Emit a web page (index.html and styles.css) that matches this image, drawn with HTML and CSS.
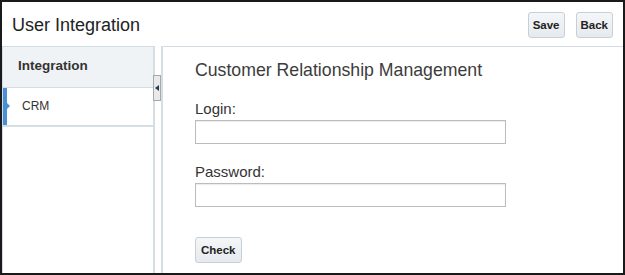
FILE: index.html
```html
<!DOCTYPE html>
<html>
<head>
<meta charset="utf-8">
<link rel="stylesheet" href="styles.css">
</head>
<body>
<div class="frame">
  <header class="topbar">
    <h1 class="title">User Integration</h1>
    <div class="actions">
      <button class="btn">Save</button>
      <button class="btn">Back</button>
    </div>
  </header>
  <div class="main">
    <aside class="nav">
      <div class="nav-head">Integration</div>
      <div class="nav-item active">CRM</div>
    </aside>
    <div class="splitter"><span class="tri"></span></div>
    <section class="content">
      <h2 class="section-title">Customer Relationship Management</h2>
      <label class="field-label">Login:</label>
      <input class="field" type="text">
      <label class="field-label">Password:</label>
      <input class="field" type="password">
      <button class="btn check">Check</button>
    </section>
  </div>
</div>
</body>
</html>
```
FILE: styles.css
```css
* { box-sizing: border-box; }
html, body { margin: 0; padding: 0; background: #fff; }
body { font-family: "Liberation Sans", Arial, sans-serif; color: #333; }

.frame {
  width: 625px;
  height: 275px;
  border: 2px solid #1a1a1a;
  display: flex;
  flex-direction: column;
  background: #fff;
  overflow: hidden;
}

.topbar {
  height: 44px;
  flex: none;
  display: flex;
  align-items: center;
  justify-content: space-between;
  padding: 1px 10px 0 10px;
}
.title {
  margin: 0;
  font-size: 18px;
  font-weight: normal;
  line-height: 22px;
  color: #222;
}
.actions { display: flex; gap: 11px; }

.btn {
  font-family: "Liberation Sans", Arial, sans-serif;
  font-size: 11.5px;
  font-weight: bold;
  color: #222;
  height: 26px;
  padding: 0 4px;
  background: linear-gradient(#f4f6f8, #e6eaee);
  border: 1px solid #c6d0d8;
  border-radius: 3px;
}

.main {
  flex: 1;
  display: flex;
  gap: 6px;
  position: relative;
}

.nav {
  width: 153px;
  flex: none;
  border-left: 1px solid #d3dce3;
  border-top: 1px solid #d3dce3;
  border-right: 2px solid #d6dee5;
  background: #fff;
}
.nav-head {
  height: 41px;
  background: #f0f3f5;
  border-bottom: 1px solid #d6dee5;
  padding-left: 15px;
  font-size: 13.5px;
  font-weight: bold;
  line-height: 38px;
  color: #333;
}
.nav-item {
  height: 39px;
  border-bottom: 2px solid #d6dee5;
  padding-left: 19px;
  font-size: 12px;
  line-height: 37px;
  color: #333;
  position: relative;
}
.nav-item.active::before {
  content: "";
  position: absolute;
  left: 0;
  top: 0;
  width: 4px;
  height: 37px;
  background: #4a8fd6;
}
.nav-item.active::after {
  content: "";
  position: absolute;
  left: 4px;
  top: 15px;
  border-left: 3px solid #4a8fd6;
  border-top: 3px solid transparent;
  border-bottom: 3px solid transparent;
}

.splitter {
  position: absolute;
  left: 151px;
  top: 29px;
  width: 8px;
  height: 26px;
  background: #e9e9e9;
  border: 1px solid #a8a8a8;
}
.splitter .tri {
  position: absolute;
  left: 1px;
  top: 9px;
  border-right: 4px solid #2a3a55;
  border-top: 3px solid transparent;
  border-bottom: 3px solid transparent;
}

.content {
  flex: 1;
  border-top: 1px solid #d3dce3;
  border-left: 2px solid #d6dee5;
  padding: 13px 0 0 32px;
  display: flex;
  flex-direction: column;
  align-items: flex-start;
}
.section-title {
  margin: 0;
  font-size: 17.7px;
  font-weight: normal;
  line-height: 21px;
  color: #3c3c3c;
}
.field-label {
  display: block;
  margin-top: 19px;
  font-size: 15px;
  line-height: 17px;
  color: #333;
}
.field {
  display: block;
  margin-top: 3px;
  width: 311px;
  height: 24px;
  border: 1px solid #bcbcbc;
  box-shadow: inset 0 1px 1px rgba(0,0,0,0.08);
  padding: 0 4px;
  font-size: 13px;
}
.field + .field-label { margin-top: 19px; }
.check { margin-top: 30px; padding: 0 5px; }
```
